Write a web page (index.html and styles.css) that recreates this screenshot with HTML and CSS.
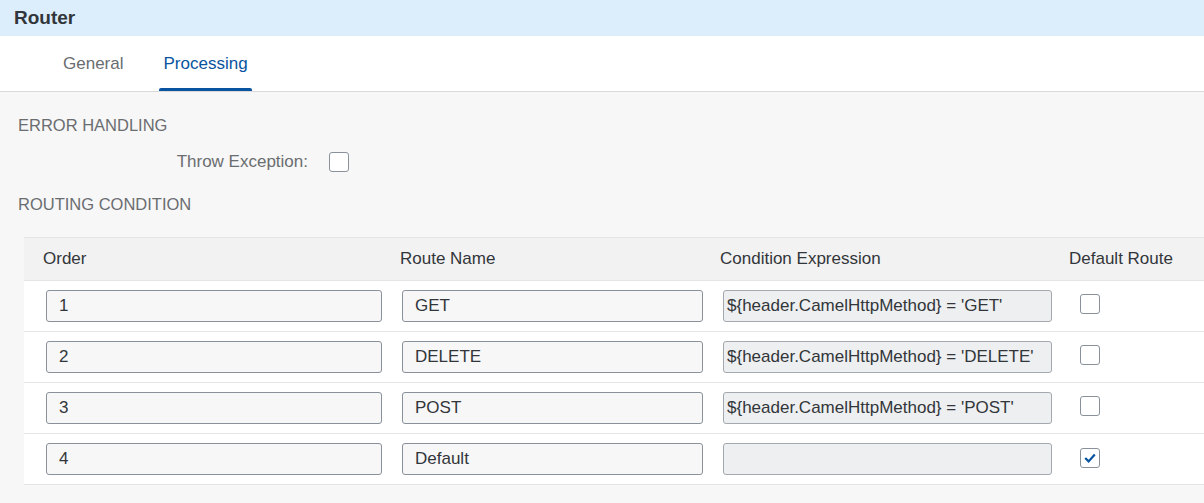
FILE: index.html
```html
<!DOCTYPE html>
<html lang="en">
<head>
<meta charset="utf-8">
<title>Router</title>
<link rel="stylesheet" href="styles.css">
</head>
<body>
<div class="header">Router</div>
<div class="tabs">
  <div class="tab">General</div>
  <div class="tab active">Processing</div>
</div>
<div class="content">
  <div class="section-title">ERROR HANDLING</div>
  <div class="form-row">
    <label class="form-label">Throw Exception:</label>
    <span class="checkbox"></span>
  </div>
  <div class="section-title second">ROUTING CONDITION</div>
  <div class="table">
    <div class="row head">
      <div class="cell c1">Order</div>
      <div class="cell c2">Route Name</div>
      <div class="cell c3">Condition Expression</div>
      <div class="cell c4">Default Route</div>
    </div>
    <div class="row">
      <div class="cell c1"><div class="input">1</div></div>
      <div class="cell c2"><div class="input">GET</div></div>
      <div class="cell c3"><div class="input disabled">${header.CamelHttpMethod} = 'GET'</div></div>
      <div class="cell c4"><span class="checkbox"></span></div>
    </div>
    <div class="row">
      <div class="cell c1"><div class="input">2</div></div>
      <div class="cell c2"><div class="input">DELETE</div></div>
      <div class="cell c3"><div class="input disabled">${header.CamelHttpMethod} = 'DELETE'</div></div>
      <div class="cell c4"><span class="checkbox"></span></div>
    </div>
    <div class="row">
      <div class="cell c1"><div class="input">3</div></div>
      <div class="cell c2"><div class="input">POST</div></div>
      <div class="cell c3"><div class="input disabled">${header.CamelHttpMethod} = 'POST'</div></div>
      <div class="cell c4"><span class="checkbox"></span></div>
    </div>
    <div class="row">
      <div class="cell c1"><div class="input">4</div></div>
      <div class="cell c2"><div class="input">Default</div></div>
      <div class="cell c3"><div class="input disabled"></div></div>
      <div class="cell c4"><span class="checkbox checked"><svg width="18" height="18" viewBox="0 0 18 18"><path d="M4.2 9 L7.6 12.4 L13.8 5.4" fill="none" stroke="#0854a0" stroke-width="2.2"/></svg></span></div>
    </div>
  </div>
</div>
</body>
</html>
```
FILE: styles.css
```css
* { box-sizing: border-box; }
html, body { margin: 0; padding: 0; }
body {
  background: #f7f7f7;
  font-family: "Liberation Sans", Arial, sans-serif;
  color: #32363a;
  overflow: hidden;
}
.header {
  height: 36px;
  background: #dcedfb;
  padding-left: 14px;
  display: flex;
  align-items: center;
  font-size: 19px;
  font-weight: bold;
  color: #32363a;
}
.tabs {
  height: 56px;
  background: #ffffff;
  border-bottom: 1px solid #d9d9d9;
  display: flex;
  gap: 32px;
  padding-left: 59px;
}
.tab {
  position: relative;
  display: flex;
  align-items: center;
  padding: 0 4px;
  font-size: 17px;
  color: #6a6d70;
}
.tab.active { color: #0854a0; }
.tab.active::after {
  content: "";
  position: absolute;
  left: 0;
  right: 0;
  bottom: 0;
  height: 3px;
  background: #0854a0;
  border-radius: 2px 2px 0 0;
}
.content {
  padding: 22px 0 0 18px;
}
.section-title {
  font-size: 16.5px;
  line-height: 22px;
  color: #6a6d70;
}
.section-title.second { margin-top: 15px; }
.form-row {
  margin-top: 10px;
  height: 32px;
  display: flex;
  align-items: center;
  gap: 21px;
}
.form-label {
  width: 290px;
  text-align: right;
  font-size: 17px;
  color: #6a6d70;
}
.checkbox {
  width: 20px;
  height: 20px;
  border: 1px solid #89919a;
  border-radius: 3px;
  background: #ffffff;
  display: inline-flex;
  align-items: center;
  justify-content: center;
}
.table {
  margin-top: 22px;
  margin-left: 6px;
  width: 1180px;
  border-top: 1px solid #e5e5e5;
}
.row {
  display: grid;
  grid-template-columns: 368px 321px 349px 1fr;
  height: 51px;
  background: #ffffff;
  border-bottom: 1px solid #e5e5e5;
  align-items: center;
}
.row.head {
  height: 43px;
  background: #f2f2f2;
  font-size: 17px;
  color: #32363a;
}
.row.head .c1 { padding-left: 19px; }
.row.head .c2 { padding-left: 8px; }
.row.head .c3 { padding-left: 7px; }
.row.head .c4 { padding-left: 7px; }
.cell { min-width: 0; }
.row .c1 { padding: 0 10px 0 22px; }
.row .c2, .row .c3 { padding: 0 10px; }
.row .c4 { padding-left: 18px; }
.input {
  height: 32px;
  border: 1px solid #89919a;
  border-radius: 3px;
  background: #f7f7f7;
  padding: 0 12px;
  font-size: 17px;
  line-height: 30px;
  color: #32363a;
  white-space: nowrap;
  overflow: hidden;
}
.input.disabled {
  background: #eeeff0;
  border-color: #a3a9ae;
  padding: 0 3px;
}
```
